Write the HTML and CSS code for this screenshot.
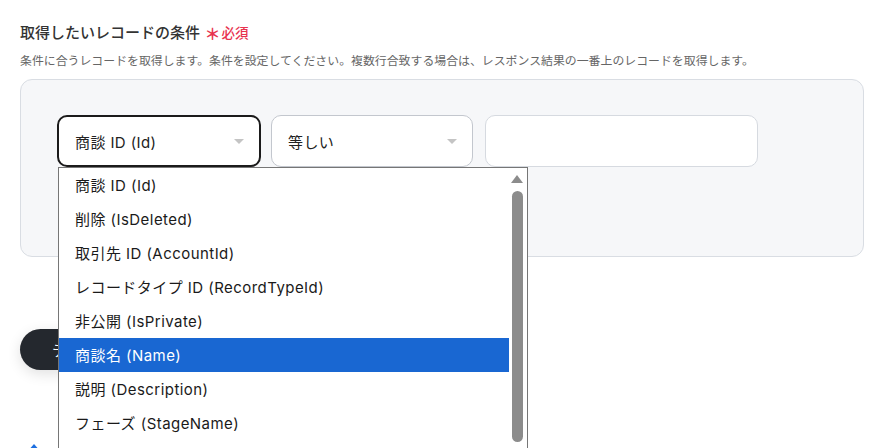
FILE: index.html
```html
<!DOCTYPE html>
<html lang="ja">
<head>
<meta charset="utf-8">
<link rel="stylesheet" href="styles.css">
</head>
<body>
<div class="page">
  <div class="title">取得したいレコードの条件 <span class="req"><span class="ast">＊</span>必須</span></div>
  <p class="desc">条件に合うレコードを取得します。条件を設定してください。複数行合致する場合は、レスポンス結果の一番上のレコードを取得します。</p>
  <div class="panel">
    <div class="row">
      <div class="select-wrap">
        <div class="select active">
          <span>商談 ID (Id)</span>
          <span class="caret"></span>
        </div>
        <div class="dropdown">
          <ul class="options">
            <li>商談 ID (Id)</li>
            <li>削除 (IsDeleted)</li>
            <li>取引先 ID (AccountId)</li>
            <li>レコードタイプ ID (RecordTypeId)</li>
            <li>非公開 (IsPrivate)</li>
            <li class="selected">商談名 (Name)</li>
            <li>説明 (Description)</li>
            <li>フェーズ (StageName)</li>
          </ul>
          <div class="scrollbar">
            <span class="up"></span>
            <span class="thumb"></span>
          </div>
        </div>
      </div>
      <div class="select second">
        <span>等しい</span>
        <span class="caret"></span>
      </div>
      <div class="input"></div>
    </div>
  </div>
  <button class="test-btn">テスト</button>
  <div class="bottom-icon"></div>
</div>
</body>
</html>
```
FILE: styles.css
```css
html, body {
  margin: 0;
  padding: 0;
  background: #ffffff;
  overflow: hidden;
  height: 448px;
}
body {
  font-family: "Inter", "Noto Sans CJK JP", sans-serif;
  color: #222;
}
.page {
  padding: 21px 20px 0 20px;
}
.title {
  font-family: "Noto Sans CJK JP", sans-serif;
  font-size: 15px;
  font-weight: 500;
  line-height: 20px;
  color: #333;
}
.req {
  color: #e8334f;
  font-size: 13.5px;
  font-weight: 500;
}
.ast {
  font-size: 16px;
  font-weight: 700;
  margin-left: 1px;
  margin-right: 1px;
  position: relative;
  top: 2px;
}
.desc {
  margin: 9px 0 0 0;
  font-family: "Noto Sans CJK JP", sans-serif;
  font-size: 11.9px;
  line-height: 18px;
  color: #666;
}
.panel {
  margin-top: 10px;
  background: #f6f7f9;
  border: 1px solid #d9dde3;
  border-radius: 12px;
  padding: 35px 0 0 36px;
  box-sizing: border-box;
  height: 178px;
}
.row {
  display: flex;
  align-items: flex-start;
}
.select-wrap {
  position: relative;
  z-index: 5;
}
.select {
  box-sizing: border-box;
  height: 52px;
  background: #fff;
  border: 1px solid #c3c7ce;
  border-radius: 10px;
  display: flex;
  align-items: center;
  justify-content: space-between;
  padding: 0 15px 0 16px;
  font-size: 15px;
  letter-spacing: 0.4px;
  color: #222;
}
.select.active {
  width: 204px;
  border: 2px solid #1b1b1b;
  padding-left: 16px;
}
.select.second {
  width: 202px;
  margin-left: 10px;
}
.caret {
  width: 0;
  height: 0;
  border-left: 5px solid transparent;
  border-right: 5px solid transparent;
  border-top: 5px solid #c4c4c4;
}
.input {
  box-sizing: border-box;
  width: 273px;
  height: 52px;
  margin-left: 12px;
  background: #fff;
  border: 1px solid #d6dae0;
  border-radius: 10px;
}
.dropdown {
  position: absolute;
  top: 52px;
  left: 1px;
  width: 470px;
  height: 300px;
  box-sizing: border-box;
  background: #fff;
  border: 1px solid #767676;
  display: flex;
}
.options {
  list-style: none;
  margin: 0;
  padding: 0;
  width: 450px;
}
.options li {
  height: 34px;
  line-height: 36px;
  padding-left: 16px;
  font-size: 15px;
  letter-spacing: 0.45px;
  color: #1a1a1a;
  white-space: nowrap;
  overflow: hidden;
}
.options li.selected {
  background: #1967d2;
  color: #fff;
}
.scrollbar {
  flex: 1;
  position: relative;
}
.up {
  position: absolute;
  top: 7px;
  left: 2px;
  width: 0;
  height: 0;
  border-left: 6px solid transparent;
  border-right: 6px solid transparent;
  border-bottom: 8px solid #8c8c8c;
}
.thumb {
  position: absolute;
  top: 23px;
  left: 3px;
  width: 11px;
  height: 251px;
  background: #8c8c8c;
  border-radius: 6px;
}
.test-btn {
  display: block;
  margin-top: 72px;
  height: 41px;
  padding: 0 32px;
  border: none;
  border-radius: 21px;
  background: #24282e;
  color: #fff;
  font-family: "Noto Sans CJK JP", sans-serif;
  font-size: 15px;
  box-shadow: 0 4px 14px rgba(0, 0, 0, 0.12);
}
.bottom-icon {
  margin: 74px 0 0 7px;
  width: 0;
  height: 0;
  border-left: 7px solid transparent;
  border-right: 7px solid transparent;
  border-bottom: 8px solid #1d6fe0;
}
```
